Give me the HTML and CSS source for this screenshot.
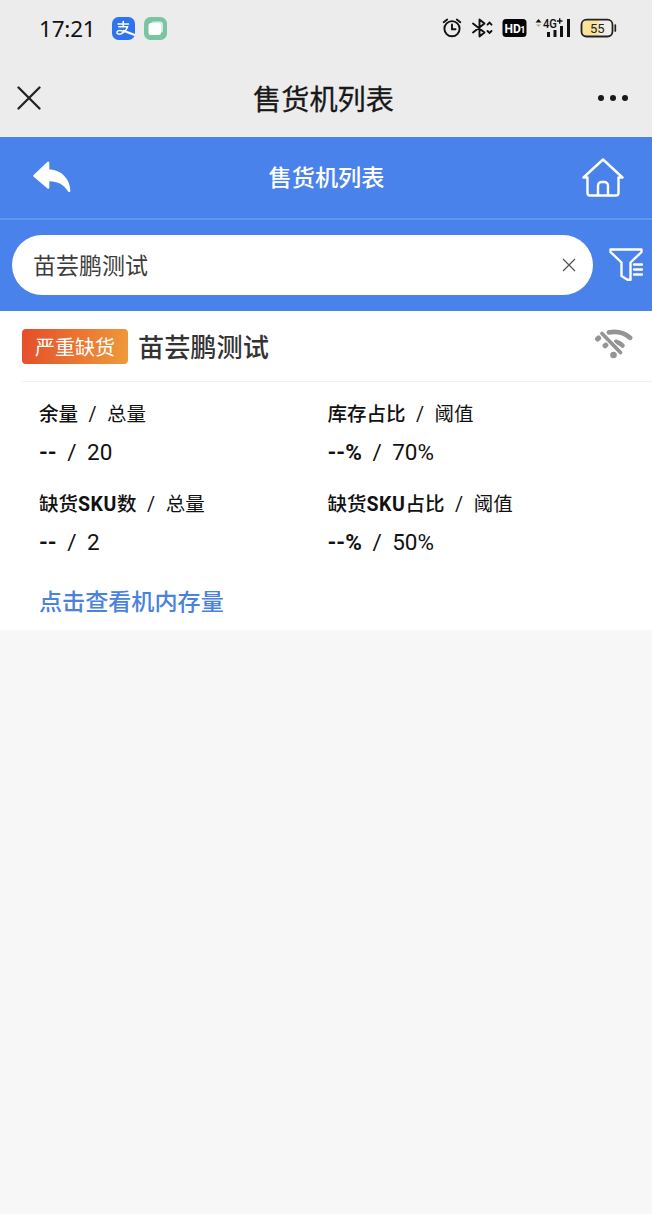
FILE: index.html
```html
<!DOCTYPE html>
<html lang="zh-CN">
<head>
<meta charset="utf-8">
<title>售货机列表</title>
<link rel="stylesheet" href="styles.css">
</head>
<body>
<div class="status">
  <span class="time">17:21</span>
  <svg class="pay" viewBox="0 0 23 23" width="23" height="23"><rect width="23" height="23" rx="6.5" fill="#2f74ee"/><g fill="none" stroke="#fff" stroke-width="1.500" stroke-linecap="round"><path d="M6 7h10.500M11.200 4.500v5M6.800 9.800h8.700c-1 3.200-3.500 5.700-6.300 7-2.700 1-4.700-.2-4.200-1.900.7-1.800 3.800-1.600 6.500-.5"/><path d="M11.500 13.800l10.700 4" stroke-width="2"/></g></svg>
  <svg class="copy" viewBox="0 0 23 23" width="23" height="23"><rect width="23" height="23" rx="6.500" fill="#79c5a3"/><rect x="7" y="4.500" width="12" height="11.500" rx="3" fill="#d5eee3"/><rect x="4.500" y="6" width="12.500" height="12" rx="2.500" fill="#fff"/></svg>
  <svg class="sys" viewBox="0 0 180 26" width="180" height="26">
    <g fill="none" stroke="#111" stroke-width="1.900" stroke-linecap="round">
      <circle cx="12" cy="13.700" r="7.600"/><path d="M12 9.500v4.700h3.500M3.700 7.200l3.500-2.600M20.300 7.200l-3.500-2.600"/>
      <path d="M33 8.500l11.500 9-5 4V4.500l5 4-11.500 9" stroke-linejoin="round"/>
      <path d="M47.500 9.700l2-2 2 2M47.500 16l2 2 2-2"/>
    </g>
    <rect x="62.500" y="4" width="24" height="18" rx="3.500" fill="#050505"/>
    <text x="64.500" y="17.500" class="hd">HD</text><text x="80.300" y="17.500" class="hd-num">1</text>
    <path d="M95.500 7.500l3-3.500 3 3.500z" fill="#111"/><path d="M96 9.500h5l-2.500 2.500z" fill="#aaa"/>
    <text x="103" y="12.700" class="net" textLength="14" lengthAdjust="spacingAndGlyphs">4G</text><path d="M117 6h5.500M119.700 3.200v5.500" stroke="#111" stroke-width="1.400"/>
    <path d="M108.500 17v5M115 15v7M121.500 11v11M128.500 4v18" stroke="#111" stroke-width="3"/>
    <rect x="141.500" y="4.700" width="31" height="16.800" rx="5" fill="#f0eee7"/>
    <path d="M146.500 5h12v16h-12a4.500 4.500 0 0 1-4.500-4.500v-7a4.500 4.500 0 0 1 4.500-4.500z" fill="#fae29b"/>
    <rect x="141.500" y="4.700" width="31" height="16.800" rx="5" fill="none" stroke="#222" stroke-width="1.800"/>
    <path d="M175.300 10v6" stroke="#222" stroke-width="1.700" stroke-linecap="round"/>
    <text x="150" y="17.500" class="level">55</text>
  </svg>
</div>
<header class="titlebar">
  <svg viewBox="0 0 24 24" width="24" height="24"><path d="M1.500 1.500l21 21M22.500 1.500l-21 21" stroke="#222" stroke-width="2.300" stroke-linecap="round"/></svg>
  <h1>售货机列表</h1>
  <svg viewBox="0 0 32 8" width="32" height="8" fill="#181818"><circle cx="4" cy="4" r="3"/><circle cx="16" cy="4" r="3"/><circle cx="28" cy="4" r="3"/></svg>
</header>
<nav class="nav">
  <svg class="back" viewBox="0 0 38 32" width="38" height="32"><path d="M.4 14.200L14.500.8Q16.300-.2 16.300 2v6.500C28 8.500 37 18 37.400 29.500q-.3 2.500-2 1.300C30.500 23.500 25 20.500 16.300 20.300v6q0 2.200-1.800 1.200L.4 15.500q-.6-.6 0-1.300z" fill="#fff"/></svg>
  <h2>售货机列表</h2>
  <svg class="home" viewBox="0 0 42 40" width="42" height="40" fill="none" stroke="#fff" stroke-width="2.400" stroke-linejoin="round" stroke-linecap="round"><path d="M5.500 19.500H1.500L21 1.500l19.500 18h-4V35a2.500 2.500 0 0 1-2.500 2.500H8A2.500 2.500 0 0 1 5.500 35zM16 37v-9.500a3.500 3.500 0 0 1 3.500-3.500h3a3.500 3.500 0 0 1 3.500 3.500V37"/></svg>
</nav>
<div class="searchbar">
  <div class="search"><span>苗芸鹏测试</span><svg viewBox="0 0 14 14" width="14" height="14"><path d="M1 1l12 12M13 1L1 13" stroke="#555" stroke-width="1.300"/></svg></div>
  <svg class="filter" viewBox="0 0 34 36" width="34" height="36" fill="none" stroke="#fff" stroke-width="2.400" stroke-linejoin="round" stroke-linecap="round"><path d="M1.500 2.500h31v2.500L21.500 15.500v17.300h-3L12.500 29V15.500L1.500 5zM25 17.500h8M25 22.500h8M25 27.500h8"/></svg>
</div>
<main class="card">
  <div class="card-head">
    <span class="badge">严重缺货</span>
    <span class="name">苗芸鹏测试</span>
    <svg class="offline" viewBox="0 0 40 32" width="40" height="32" fill="none" stroke="#949494" stroke-linecap="round"><path d="M15 4.300Q28 2.300 36 9.800" stroke-width="4.800"/><path d="M3.500 11l1.200-1M11 17.800l1-.8" stroke-width="5"/><path d="M22 13.800Q26 14.800 28.500 17.500" stroke-width="4.500"/><path d="M6 3.500L29 27" stroke="#fff" stroke-width="6" stroke-linecap="butt"/><path d="M8 5.500L26.500 24.500" stroke-width="3.800"/><circle cx="19.500" cy="27" r="3.300" fill="#949494" stroke="none"/></svg>
  </div>
  <div class="stats">
    <div class="stat"><p class="label"><b>余量</b><i>/</i>总量</p><p class="value"><b>--</b><i>/</i>20</p></div>
    <div class="stat"><p class="label"><b>库存占比</b><i>/</i>阈值</p><p class="value"><b>--%</b><i>/</i>70%</p></div>
    <div class="stat"><p class="label"><b>缺货<em>SKU</em>数</b><i>/</i>总量</p><p class="value"><b>--</b><i>/</i>2</p></div>
    <div class="stat"><p class="label"><b>缺货<em>SKU</em>占比</b><i>/</i>阈值</p><p class="value"><b>--%</b><i>/</i>50%</p></div>
  </div>
  <a class="detail">点击查看机内存量</a>
</main>
</body>
</html>
```
FILE: styles.css
```css
* { box-sizing: border-box; }
body { margin: 0; min-height: 1214px; background: #f7f7f7; color: #111; font-family: Roboto, "Noto Sans CJK SC", sans-serif; }
h1, h2, p { margin: 0; font-weight: 400; }
svg { display: block; flex: none; }

.status { display: flex; align-items: center; height: 56px; padding: 0 32px 0 39px; background: #ececec; }
.time { width: 72.5px; padding-top: 1px; font: 22.5px/30px "Noto Sans", sans-serif; letter-spacing: -0.2px; }
.copy { margin-left: 9px; }
.sys { margin-left: auto; }
.hd { font: 700 12px Roboto, sans-serif; fill: #fff; }
.hd-num { font: 700 9px Roboto, sans-serif; fill: #fff; }
.net { font: 500 13px Roboto, sans-serif; fill: #111; }
.level { font: 13px Roboto, sans-serif; fill: #222; }

.titlebar { display: flex; align-items: center; justify-content: space-between; height: 81px; padding: 3px 23px 0 17px; background: #ececec; }
.titlebar h1 { padding: 5px 0 0 9px; font-size: 28.2px; line-height: 40px; color: #181818; -webkit-text-stroke: 0.3px #181818; }

.nav { display: flex; align-items: center; justify-content: space-between; height: 81px; padding: 0 28px 0 33px; background: #4a82ec; color: #fff; }
.back { margin-top: -2px; }
.nav h2 { font-size: 23.2px; line-height: 34px; font-weight: 500; }

.searchbar { display: flex; align-items: center; gap: 16px; height: 93px; padding: 1px 9px 2px 12px; border-top: 2px solid #6295f0; background: #4a82ec; }
.search { display: flex; align-items: center; justify-content: space-between; width: 581px; height: 60px; padding: 0 17px 0 21px; border-radius: 30px; background: #fff; color: #3c3c3c; font-size: 23px; line-height: 34px; }
.search span { padding-top: 4px; }

.card { height: 319px; background: #fff; }
.card-head { display: flex; align-items: center; height: 71px; margin-left: 22px; padding-right: 18px; border-bottom: 1px solid #f0f0f0; }
.badge { width: 106px; height: 35px; margin-top: 1px; padding-top: 2px; border-radius: 4px; background: linear-gradient(100deg, #e54d2a, #ee9b3a); color: #fff; font-size: 20px; line-height: 34px; text-align: center; }
.name { margin-left: 10px; padding-top: 3px; font-size: 26.2px; line-height: 38px; font-weight: 500; color: #333; }
.offline { margin: -5px 0 0 auto; }

.stats { display: grid; grid-template-columns: 288.5px 1fr; row-gap: 14px; padding: 18px 0 0 39px; }
.stat { height: 76px; }
.stats b { font-weight: 700; }
.stats i { font-style: normal; }
.label { font-size: 19.5px; line-height: 30px; }
.label b { font-weight: 500; }
.label em { font-style: normal; font-weight: 700; letter-spacing: 0.6px; }
.label i { margin: 0 10.5px; }
.value { margin-top: 7px; font-size: 22.5px; line-height: 30px; }
.value i { margin: 0 10.5px; }
.detail { display: block; margin: 20px 0 0 39px; color: #4a82dc; font-size: 23.1px; line-height: 34px; font-weight: 500; }
```
